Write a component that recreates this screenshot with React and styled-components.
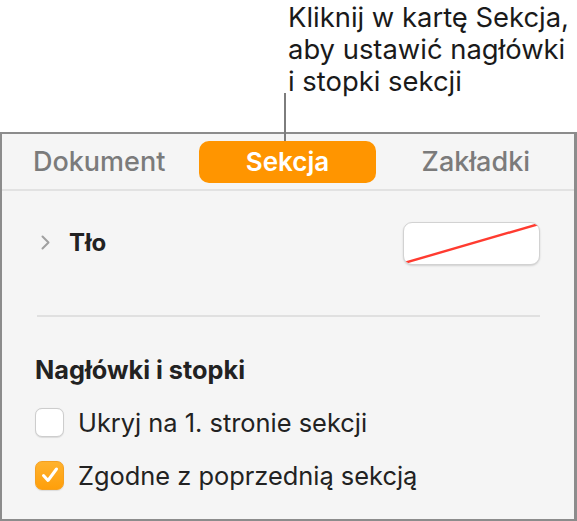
import styled, { createGlobalStyle } from "styled-components";

const GlobalStyle = createGlobalStyle`
  html, body {
    margin: 0;
    padding: 0;
    background: #ffffff;
  }
  body {
    font-family: Inter, Roboto, "Noto Sans", sans-serif;
    -webkit-font-smoothing: antialiased;
  }
`;

const Page = styled.div`
  position: relative;
  width: 577px;
  height: 521px;
  overflow: hidden;
`;

const Callout = styled.div`
  padding: 1px 0 0 288px;
  height: 132px;
  box-sizing: border-box;
  font-size: 27.4px;
  line-height: 32px;
  color: #1a1a1a;
  white-space: nowrap;
`;

const Leader = styled.div`
  position: absolute;
  left: 284px;
  top: 93px;
  width: 2px;
  height: 48px;
  background: #7d7d7d;
  z-index: 2;
`;

const Panel = styled.div`
  box-sizing: border-box;
  width: 577px;
  height: 389px;
  border: 2px solid #8c8c8c;
  border-right-width: 3px;
  background: #f5f5f5;
`;

const TabBar = styled.div`
  display: grid;
  grid-template-columns: 1fr 1fr 1fr;
  align-items: center;
  height: 57px;
  padding: 0 4px 0 3px;
  border-bottom: 2px solid #e2e2e2;
  box-sizing: border-box;
`;

const Tab = styled.div`
  height: 42px;
  margin: 0 6px;
  display: flex;
  align-items: center;
  justify-content: center;
  border-radius: 10px;
  font-size: ${(p) => (p.$active ? 26 : 27)}px;
  font-weight: ${(p) => (p.$active ? 600 : 500)};
  color: ${(p) => (p.$active ? "#ffffff" : "#7b7b7b")};
  background: ${(p) => (p.$active ? "#ff9500" : "transparent")};
`;

const Body = styled.div`
  padding: 0 34px 0 33px;
`;

const BgRow = styled.div`
  display: flex;
  align-items: flex-start;
  height: 126px;
  padding-top: 31px;
  box-sizing: border-box;
  border-bottom: 2px solid #e0e0e0;
  margin-left: 2px;
`;

const Chevron = styled.svg`
  width: 11px;
  height: 17px;
  margin: 12px 18px 0 3px;
`;

const Label = styled.div`
  flex: 1;
  font-size: 24px;
  line-height: 42px;
  font-weight: 700;
  color: #222;
`;

const ColorWell = styled.div`
  width: 137px;
  height: 43px;
  box-sizing: border-box;
  border-radius: 9px;
  background: #fff;
  border: 1px solid #d2d2d2;
  box-shadow: 0 1px 2px rgba(0, 0, 0, 0.15);
  overflow: hidden;
  svg {
    display: block;
    width: 100%;
    height: 100%;
  }
`;

const Heading = styled.div`
  margin-top: 38px;
  font-size: 25.3px;
  line-height: 30px;
  font-weight: 700;
  color: #222;
`;

const CheckRow = styled.div`
  display: flex;
  align-items: center;
  gap: 14px;
  height: 30px;
  margin-top: ${(p) => p.$gap}px;
  font-size: 25.4px;
  color: #222;
`;

const Box = styled.div`
  width: 29px;
  height: 29px;
  flex: none;
  box-sizing: border-box;
  border-radius: 7px;
  display: flex;
  align-items: center;
  justify-content: center;
  background: ${(p) => (p.$checked ? "linear-gradient(#ffb22e, #ff9f0a)" : "#ffffff")};
  border: 1px solid ${(p) => (p.$checked ? "#f5a020" : "#cdcdcd")};
  box-shadow: 0 0.5px 1px rgba(0, 0, 0, 0.1);
`;

export default function App() {
  return (
    <Page>
      <GlobalStyle />
      <Callout>
        Kliknij w kartę Sekcja,
        <br />
        aby ustawić nagłówki
        <br />i stopki sekcji
      </Callout>
      <Leader />
      <Panel>
        <TabBar>
          <Tab>Dokument</Tab>
          <Tab $active>Sekcja</Tab>
          <Tab>Zakładki</Tab>
        </TabBar>
        <Body>
          <BgRow>
            <Chevron viewBox="0 0 11 17">
              <path d="M2.5 2.5l6 6-6 6" fill="none" stroke="#a0a0a0" strokeWidth="2" strokeLinecap="round" strokeLinejoin="round" />
            </Chevron>
            <Label>Tło</Label>
            <ColorWell>
              <svg viewBox="0 0 137 43" preserveAspectRatio="none">
                <line x1="0" y1="42" x2="137" y2="1" stroke="#ff3b30" strokeWidth="2.5" />
              </svg>
            </ColorWell>
          </BgRow>
          <Heading>Nagłówki i stopki</Heading>
          <CheckRow $gap={22}>
            <Box />
            Ukryj na 1. stronie sekcji
          </CheckRow>
          <CheckRow $gap={23}>
            <Box $checked>
              <svg width="22" height="20" viewBox="0 0 22 20">
                <path d="M4.5 10.5l4.5 5L17.5 4" fill="none" stroke="#fff" strokeWidth="3" strokeLinecap="round" strokeLinejoin="round" />
              </svg>
            </Box>
            Zgodne z poprzednią sekcją
          </CheckRow>
        </Body>
      </Panel>
    </Page>
  );
}
